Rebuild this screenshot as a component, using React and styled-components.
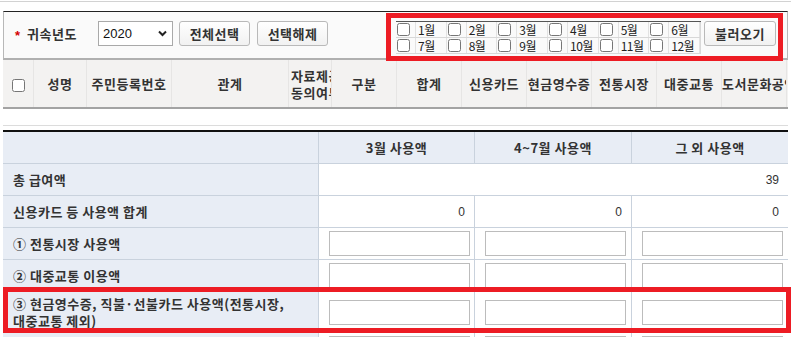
import React from 'react';
import styled, { createGlobalStyle } from 'styled-components';

const GlobalStyle = createGlobalStyle`
  *, *::before, *::after { box-sizing: border-box; }
  html, body { margin: 0; padding: 0; background: #fff; overflow: hidden; }
  body {
    font-family: "Noto Sans CJK KR", "Noto Sans", sans-serif;
    color: #333;
  }
`;

const months = ['1월', '2월', '3월', '4월', '5월', '6월', '7월', '8월', '9월', '10월', '11월', '12월'];

const gridCols = [
  { w: 31, check: true },
  { w: 53, label: '성명' },
  { w: 85, label: '주민등록번호' },
  { w: 117, label: '관계' },
  { w: 43, label: '자료제공\n동의여부', clip: true },
  { w: 65, label: '구분' },
  { w: 65, label: '합계' },
  { w: 65, label: '신용카드' },
  { w: 65, label: '현금영수증' },
  { w: 65, label: '전통시장' },
  { w: 65, label: '대중교통' },
  { w: 65, label: '도서문화공연' },
  { w: 65, label: '직불카드' },
];

const inputRows = [
  { label: '① 전통시장 사용액', h: 31 },
  { label: '② 대중교통 이용액', h: 31 },
  { label: <>③ 현금영수증, 직불·선불카드 사용액(전통시장,<br />대중교통 제외)</>, h: 40, mark: true },
  { label: '④ 도서·공연·박물관·미술관 사용액', h: 31 },
];

const App = () => {
  return (
    <Page>
      <GlobalStyle />
      <TopRule />
      <Content>
        <Toolbar>
          <YearGroup>
            <Required>*</Required>
            <FieldLabel>귀속년도</FieldLabel>
            <SelectBox>
              <select defaultValue="2020">
                <option>2020</option>
                <option>2019</option>
              </select>
              <svg width="9" height="7" viewBox="0 0 9 7">
                <polyline points="1,1.5 4.5,5 8,1.5" fill="none" stroke="#222" strokeWidth="2" />
              </svg>
            </SelectBox>
            <Button>전체선택</Button>
            <Button>선택해제</Button>
          </YearGroup>

          <MonthArea>
            <MonthGrid>
              {months.map((m) => (
                <React.Fragment key={m}>
                  <CheckCell><input type="checkbox" /></CheckCell>
                  <MonthLabel>{m}</MonthLabel>
                </React.Fragment>
              ))}
            </MonthGrid>
            <Button $w={72}>불러오기</Button>
            <Highlight $inset="-8px -7px -7px -10px" />
          </MonthArea>
        </Toolbar>

        <GridWrap>
          <GridHead>
            {gridCols.map((c, i) => (
              <HeadCell key={i} $w={c.w} $clip={c.clip}>
                {c.check ? <span><input type="checkbox" /></span> : <span>{c.label}</span>}
              </HeadCell>
            ))}
          </GridHead>
          <GridBody />
        </GridWrap>

        <Summary>
          <SumRow $head>
            <LabelCell />
            <HeadValue>3월 사용액</HeadValue>
            <HeadValue>4~7월 사용액</HeadValue>
            <HeadValue>그 외 사용액</HeadValue>
          </SumRow>
          <SumRow>
            <LabelCell>총 급여액</LabelCell>
            <NumCell $span={3}>39</NumCell>
          </SumRow>
          <SumRow>
            <LabelCell>신용카드 등 사용액 합계</LabelCell>
            <NumCell>0</NumCell>
            <NumCell>0</NumCell>
            <NumCell>0</NumCell>
          </SumRow>
          {inputRows.map((r, i) => (
            <SumRow key={i} $h={r.h}>
              <LabelCell>{r.label}</LabelCell>
              <InputCell><AmountInput /></InputCell>
              <InputCell><AmountInput /></InputCell>
              <InputCell><AmountInput /></InputCell>
              {r.mark && <Highlight $inset="-5px -3px -1px 0" />}
            </SumRow>
          ))}
        </Summary>
      </Content>
    </Page>
  );
};

const Page = styled.div`
  position: relative;
  width: 791px;
  height: 337px;
  overflow: hidden;
`;

const TopRule = styled.div`
  margin-top: 1px;
  height: 1px;
  background: #d2d2d2;
`;

const Content = styled.div`
  padding: 9px 3px 0;
`;

const Toolbar = styled.div`
  display: flex;
  align-items: flex-start;
  height: 49px;
  padding: 9px 11px 0 10px;
  background: #fafafa;
  border-top: 1px solid #222;
  border-left: 1px solid #b8b8b8;
  border-right: 1px solid #b8b8b8;
  border-bottom: 2px solid #b0b0b0;
`;

const YearGroup = styled.div`
  display: flex;
  align-items: center;
  height: 25px;
`;

const Required = styled.span`
  color: #d40000;
  font-family: "Liberation Sans", sans-serif;
  font-weight: bold;
  font-size: 13px;
  line-height: 13px;
  margin: 4px 7px 0 1px;
`;

const FieldLabel = styled.span`
  font-size: 13px;
  font-weight: bold;
  color: #333;
  letter-spacing: 0.5px;
  width: 71px;
`;

const SelectBox = styled.label`
  display: flex;
  align-items: center;
  width: 75px;
  height: 25px;
  padding: 0 5px 0 0;
  border: 1px solid #a9a9a9;
  background: #fff;
  select {
    flex: 1;
    min-width: 0;
    height: 100%;
    border: none;
    outline: none;
    background: transparent;
    appearance: none;
    padding: 0 0 0 4px;
    font-family: "Liberation Sans", sans-serif;
    font-size: 13px;
    color: #111;
  }
`;

const Button = styled.button`
  width: ${(p) => p.$w || 71}px;
  height: 25px;
  margin-left: 6px;
  padding: 0;
  border: 1px solid #b9b9b9;
  border-radius: 3px;
  background: linear-gradient(#ffffff, #f1f1f1);
  font-family: "Noto Sans CJK KR", sans-serif;
  font-size: 13px;
  font-weight: bold;
  color: #333;
  letter-spacing: 0.5px;
  line-height: 1;
  & + & { margin-left: 7px; }
`;

const MonthArea = styled.div`
  position: relative;
  display: flex;
  align-items: flex-start;
  margin-left: auto;
  ${Button} { margin-left: 3px; }
`;

const MonthGrid = styled.div`
  display: grid;
  grid-template-columns: repeat(6, 20px 30.67px);
  grid-template-rows: 15px 15px;
  row-gap: 1px;
  width: 305px;
  background: #d8d8d8;
  border-top: 1px solid #555;
  border-bottom: 1px solid #d8d8d8;
`;

const CheckCell = styled.div`
  display: flex;
  align-items: center;
  padding-left: 1px;
  background: #fafafa;
  border-right: 1px solid #e2e2e2;
  input { width: 13px; height: 13px; margin: 0; }
`;

const MonthLabel = styled.div`
  padding-left: 2px;
  background: #fafafa;
  border-right: 1px solid #e2e2e2;
  font-size: 12px;
  line-height: 15px;
  letter-spacing: -0.5px;
  white-space: nowrap;
  color: #222;
`;

const Highlight = styled.div`
  position: absolute;
  inset: ${(p) => p.$inset};
  border: 5px solid #ed1c24;
  pointer-events: none;
  z-index: 2;
`;

const GridWrap = styled.div`
  overflow: hidden;
  margin-bottom: 4px;
`;

const GridHead = styled.div`
  display: flex;
  height: 49px;
  background: #f3f2f1;
  border-bottom: 2px solid #a3a3a3;
`;

const HeadCell = styled.div`
  flex: 0 0 ${(p) => p.$w}px;
  display: flex;
  flex-direction: column;
  justify-content: center;
  padding-left: ${(p) => (p.$clip ? '2px' : '0')};
  overflow: hidden;
  text-align: ${(p) => (p.$clip ? 'left' : 'center')};
  white-space: ${(p) => (p.$clip ? 'pre' : 'nowrap')};
  border-right: 1px solid #e6e5e4;
  font-size: 13px;
  font-weight: bold;
  line-height: 17px;
  letter-spacing: 0.5px;
  color: #333;
  input { width: 13px; height: 13px; margin: 2px 0 0 1px; vertical-align: middle; }
`;

const GridBody = styled.div`
  height: 17px;
  border-bottom: 1px solid #dcdcdc;
`;

const Summary = styled.div`
  border-top: 2px solid #111;
`;

const SumRow = styled.div`
  position: relative;
  display: grid;
  grid-template-columns: 315px 156px 157px 1fr;
  height: ${(p) => (p.$h || 31) + 1}px;
  border-bottom: 1px solid #c9d2dd;
  background: ${(p) => (p.$head ? '#e8edf5' : '#fff')};
`;

const LabelCell = styled.div`
  display: flex;
  align-items: center;
  padding-left: 10px;
  background: #e8edf5;
  font-size: 13px;
  font-weight: bold;
  line-height: 17px;
  letter-spacing: 0.5px;
  color: #333;
  white-space: nowrap;
`;

const HeadValue = styled.div`
  display: flex;
  align-items: center;
  justify-content: center;
  border-left: 1px solid #c9d2dd;
  font-size: 13px;
  font-weight: bold;
  letter-spacing: 0.5px;
  color: #333;
`;

const NumCell = styled.div`
  grid-column: span ${(p) => p.$span || 1};
  display: flex;
  align-items: center;
  justify-content: flex-end;
  padding-right: 9px;
  border-left: 1px solid #c9d2dd;
  font-family: "Liberation Sans", sans-serif;
  font-size: 12px;
  color: #333;
`;

const InputCell = styled.div`
  display: flex;
  align-items: center;
  padding-left: 10px;
  border-left: 1px solid #c9d2dd;
`;

const AmountInput = styled.input.attrs({ type: 'text' })`
  width: 141px;
  height: 25px;
  border: 1px solid #bcbcbc;
  background: #fff;
  outline: none;
  text-align: right;
  font-family: "Liberation Sans", sans-serif;
  font-size: 12px;
`;

export default App;
